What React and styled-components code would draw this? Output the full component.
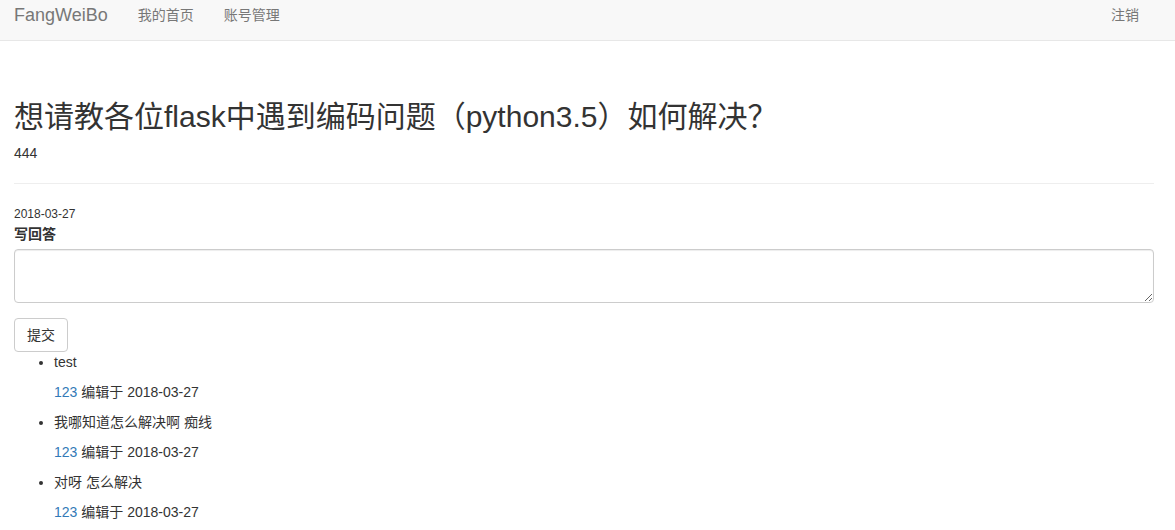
import React from "react";
import styled, { createGlobalStyle } from "styled-components";

const Global = createGlobalStyle`
  * { box-sizing: border-box; }
  body {
    margin: 0;
    background: #fff;
    color: #333;
    font-family: "Liberation Sans", Arial, "Noto Sans CJK SC", sans-serif;
    font-size: 14px;
    line-height: 1.42857143;
  }
`;

const Navbar = styled.nav`
  display: flex;
  align-items: flex-start;
  justify-content: space-between;
  height: 41px;
  padding: 5px 21px 0 0;
  background: #f8f8f8;
  border-bottom: 1px solid #e7e7e7;
`;

const NavGroup = styled.div`
  display: flex;
  align-items: center;
`;

const Brand = styled.a`
  padding: 0 15px 0 14px;
  font-size: 18px;
  line-height: 20px;
  color: #777;
  text-decoration: none;
`;

const NavLink = styled.a`
  padding: 0 15px;
  font-size: 14px;
  line-height: 20px;
  color: #777;
  text-decoration: none;
`;

const Main = styled.main`
  padding: 39px 21px 0 14px;
`;

const Title = styled.h2`
  margin: 20px 0 10px;
  font-size: 30px;
  font-weight: 400;
  line-height: 1.1;
`;

const Body = styled.p`
  margin: 0 0 10px;
`;

const Rule = styled.hr`
  margin: 20px 0;
  border: 0;
  border-top: 1px solid #eee;
`;

const DateLine = styled.div`
  font-size: 12px;
  line-height: 20px;
`;

const Label = styled.label`
  display: inline-block;
  margin-bottom: 5px;
  font-weight: bold;
`;

const FormGroup = styled.div`
  margin-bottom: 15px;
`;

const TextArea = styled.textarea`
  display: block;
  width: 100%;
  height: 54px;
  padding: 6px 12px;
  font: inherit;
  color: #555;
  background: #fff;
  border: 1px solid #ccc;
  border-radius: 4px;
  box-shadow: inset 0 1px 1px rgba(0, 0, 0, 0.075);
  resize: vertical;
`;

const Button = styled.button`
  display: inline-block;
  padding: 6px 12px;
  font: inherit;
  font-size: 14px;
  line-height: 20px;
  color: #333;
  background: #fff;
  border: 1px solid #ccc;
  border-radius: 4px;
  cursor: pointer;
`;

const List = styled.ul`
  margin: 0 0 10px;
  padding-left: 40px;
`;

const Meta = styled.p`
  margin: 10px 0;
`;

const Link = styled.a`
  color: #337ab7;
  text-decoration: none;
`;

const answers = [
  { text: "test", user: "123", date: "2018-03-27" },
  { text: "我哪知道怎么解决啊 痴线", user: "123", date: "2018-03-27" },
  { text: "对呀 怎么解决", user: "123", date: "2018-03-27" },
];

export default function App() {
  return (
    <>
      <Global />
      <Navbar>
        <NavGroup>
          <Brand href="#">FangWeiBo</Brand>
          <NavLink href="#">我的首页</NavLink>
          <NavLink href="#">账号管理</NavLink>
        </NavGroup>
        <NavGroup>
          <NavLink href="#">注销</NavLink>
        </NavGroup>
      </Navbar>
      <Main>
        <Title>想请教各位flask中遇到编码问题（python3.5）如何解决？</Title>
        <Body>444</Body>
        <Rule />
        <DateLine>2018-03-27</DateLine>
        <form onSubmit={(e) => e.preventDefault()}>
          <FormGroup>
            <Label>写回答</Label>
            <TextArea rows={2} />
          </FormGroup>
          <Button type="submit">提交</Button>
        </form>
        <List>
          {answers.map((a, i) => (
            <li key={i}>
              {a.text}
              <Meta>
                <Link href="#">{a.user}</Link> 编辑于 {a.date}
              </Meta>
            </li>
          ))}
        </List>
      </Main>
    </>
  );
}
